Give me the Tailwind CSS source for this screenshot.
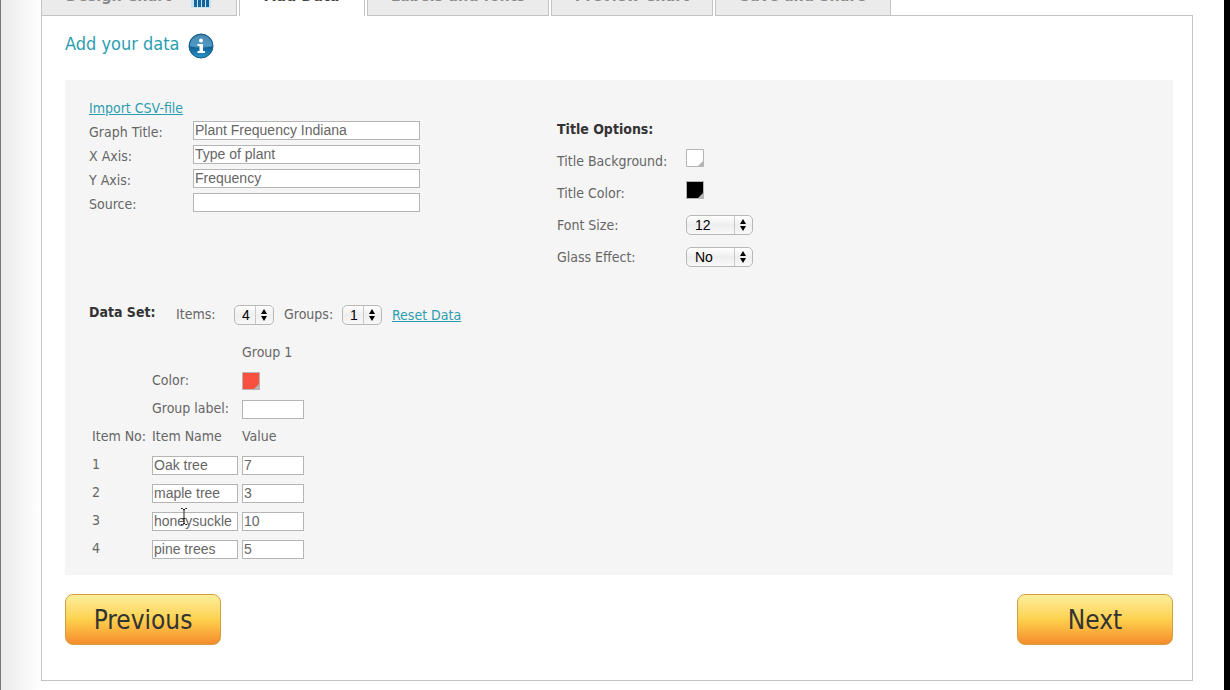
<!DOCTYPE html>
<html lang="en">

<head>
    <meta charset="UTF-8">
    <meta name="viewport" content="width=device-width, initial-scale=1.0">
    <title>Add Data</title>
    <script src="https://cdn.jsdelivr.net/npm/@tailwindcss/browser@4"></script>
</head>

<body class="bg-white font-['DejaVu_Sans_Condensed','DejaVu_Sans',sans-serif] text-sm text-[#666]">
    <div class="flex min-h-screen overflow-hidden">
        <div class="w-[41px] shrink-0 border-l border-[#777] bg-linear-to-r from-[#ebebeb] to-white"></div>
        <main class="min-w-0 flex-1">
            <!-- wizard steps -->
            <nav class="flex h-4 items-end gap-[2px] overflow-hidden text-base leading-6 font-bold text-[#8a8a8a]">
                <a href="#" class="flex h-12 w-[196px] shrink-0 items-end gap-5 border border-[#c4c4c4] bg-[#ebebeb] pb-[7px] pl-6">Design Chart
                    <svg class="h-6 w-5" viewBox="0 0 20 24">
                        <path fill="#c3e3f2" d="M0 0h20v24H0z" />
                        <path fill="#14659b" d="M3 8h3v15H3zM7 5h3v18H7zM11 3h3v20h-3zM15 0h3v23h-3z" />
                    </svg>
                </a>
                <a href="#" class="flex h-12 w-[126px] shrink-0 items-end justify-center border-x border-[#c4c4c4] bg-white pb-2 text-[#444]">Add Data</a>
                <a href="#" class="flex h-12 w-[182px] shrink-0 items-end justify-center border border-[#c4c4c4] bg-[#ebebeb] pb-[7px]">Labels and fonts</a>
                <a href="#" class="flex h-12 w-[162px] shrink-0 items-end justify-center border border-[#c4c4c4] bg-[#ebebeb] pb-[7px]">Preview Chart</a>
                <a href="#" class="flex h-12 w-[176px] shrink-0 items-end justify-center border border-[#c4c4c4] bg-[#ebebeb] pb-[7px]">Save and Share</a>
                <div class="h-px flex-1 -ml-[2px] bg-[#c4c4c4]"></div>
            </nav>

            <div class="border-x border-b border-[#c4c4c4] pt-4 pr-[19px] pb-[35px] pl-[23px]">
                <div class="mb-5 flex h-7 items-center gap-2">
                    <h1 class="pb-1 text-lg text-[#2b9db0]">Add your data</h1>
                    <button aria-label="Help">
                        <svg class="block size-[26px]" viewBox="0 0 26 26">
                            <defs>
                                <linearGradient id="ball" x1="0" y1="0" x2="0" y2="1">
                                    <stop offset="0" stop-color="#1f6a9c" />
                                    <stop offset=".5" stop-color="#2483b8" />
                                    <stop offset=".55" stop-color="#0f6096" />
                                    <stop offset="1" stop-color="#2a97c9" />
                                </linearGradient>
                            </defs>
                            <circle cx="13" cy="13" r="12" fill="url(#ball)" stroke="#155a86" />
                            <path d="M2 13a11 11 0 0 1 22 0q-11 4-22 0" fill="#fff" fill-opacity=".2" />
                            <circle cx="13" cy="7.500" r="2" fill="#fff" />
                            <path d="M9.500 11h5.500v7h2v2H9.500v-2h2v-5h-2z" fill="#fff" />
                        </svg>
                    </button>
                </div>

                <form class="bg-[#f5f5f5] px-6 pt-4 pb-3">
                    <div class="flex">
                        <div class="w-[468px] shrink-0">
                            <div class="flex h-6 items-center"><a href="#" class="text-[#2b9db0] underline">Import CSV-file</a></div>
                            <div class="flex h-6 items-center">
                                <label for="graphTitle" class="w-[104px]">Graph Title:</label>
                                <input id="graphTitle" type="text" value="Plant Frequency Indiana" class="mb-1 h-[19px] w-[227px] border border-[#b5b5b5] bg-white px-px font-['Liberation_Sans',sans-serif]">
                            </div>
                            <div class="flex h-6 items-center">
                                <label for="xAxis" class="w-[104px]">X Axis:</label>
                                <input id="xAxis" type="text" value="Type of plant" class="mb-1 h-[19px] w-[227px] border border-[#b5b5b5] bg-white px-px font-['Liberation_Sans',sans-serif]">
                            </div>
                            <div class="flex h-6 items-center">
                                <label for="yAxis" class="w-[104px]">Y Axis:</label>
                                <input id="yAxis" type="text" value="Frequency" class="mb-1 h-[19px] w-[227px] border border-[#b5b5b5] bg-white px-px font-['Liberation_Sans',sans-serif]">
                            </div>
                            <div class="flex h-6 items-center">
                                <label for="source" class="w-[104px]">Source:</label>
                                <input id="source" type="text" class="mb-1 h-[19px] w-[227px] border border-[#b5b5b5] bg-white px-px font-['Liberation_Sans',sans-serif]">
                            </div>
                        </div>

                        <div class="pt-[17px]">
                            <h2 class="flex h-8 items-center font-bold text-[#333]">Title Options:</h2>
                            <div class="flex h-8 items-center">
                                <label for="titleBackground" class="w-[129px]">Title Background:</label>
                                <button type="button" id="titleBackground" class="mb-[6px]">
                                    <svg class="block size-[18px]" viewBox="0 0 18 18">
                                        <path fill="#fff" stroke="#b5b5b5" d="M.5.5h17v17H.5z" />
                                        <path fill="#b5b5b5" d="M17 12v5h-5z" />
                                    </svg>
                                </button>
                            </div>
                            <div class="flex h-8 items-center">
                                <label for="titleColor" class="w-[129px]">Title Color:</label>
                                <button type="button" id="titleColor" class="mb-[6px]">
                                    <svg class="block size-[18px]" viewBox="0 0 18 18">
                                        <path fill="#000" stroke="#b5b5b5" d="M.5.5h17v17H.5z" />
                                        <path fill="#b5b5b5" d="M17 12v5h-5z" />
                                    </svg>
                                </button>
                            </div>
                            <div class="flex h-8 items-center">
                                <label for="fontSize" class="w-[129px]">Font Size:</label>
                                <div class="relative">
                                    <select id="fontSize" class="block h-5 w-[67px] appearance-none rounded-[5px] border border-[#b8b8b8] bg-linear-to-b from-white via-[#eee] to-[#f8f8f8] pl-2 font-['Liberation_Sans',sans-serif] text-sm leading-4 text-black">
                                        <option>12</option>
                                    </select>
                                    <svg class="pointer-events-none absolute top-0 right-0 h-5 w-5" viewBox="0 0 20 20">
                                        <path stroke="#c8c8c8" d="M1.500 1v18" />
                                        <path d="M7 9l3-5 3 5zM7 11l3 5 3-5z" />
                                    </svg>
                                </div>
                            </div>
                            <div class="flex h-8 items-center">
                                <label for="glassEffect" class="w-[129px]">Glass Effect:</label>
                                <div class="relative">
                                    <select id="glassEffect" class="block h-5 w-[67px] appearance-none rounded-[5px] border border-[#b8b8b8] bg-linear-to-b from-white via-[#eee] to-[#f8f8f8] pl-2 font-['Liberation_Sans',sans-serif] text-sm leading-4 text-black">
                                        <option>No</option>
                                    </select>
                                    <svg class="pointer-events-none absolute top-0 right-0 h-5 w-5" viewBox="0 0 20 20">
                                        <path stroke="#c8c8c8" d="M1.500 1v18" />
                                        <path d="M7 9l3-5 3 5zM7 11l3 5 3-5z" />
                                    </svg>
                                </div>
                            </div>
                        </div>
                    </div>

                    <div class="mt-[30px] mb-3 flex h-6 items-center">
                        <h2 class="w-[87px] pb-[6px] font-bold text-[#333]">Data Set:</h2>
                        <label for="items" class="w-[58px] pb-[2px]">Items:</label>
                        <div class="relative">
                            <select id="items" class="block h-5 w-10 appearance-none rounded-[5px] border border-[#b8b8b8] bg-linear-to-b from-white via-[#eee] to-[#f8f8f8] pl-[7px] font-['Liberation_Sans',sans-serif] text-sm leading-4 text-black">
                                <option>4</option>
                            </select>
                            <svg class="pointer-events-none absolute top-0 right-0 h-5 w-5" viewBox="0 0 20 20">
                                <path stroke="#c8c8c8" d="M1.500 1v18" />
                                <path d="M7 9l3-5 3 5zM7 11l3 5 3-5z" />
                            </svg>
                        </div>
                        <label for="groups" class="ml-[10px] w-[58px] pb-[2px]">Groups:</label>
                        <div class="relative">
                            <select id="groups" class="block h-5 w-10 appearance-none rounded-[5px] border border-[#b8b8b8] bg-linear-to-b from-white via-[#eee] to-[#f8f8f8] pl-[7px] font-['Liberation_Sans',sans-serif] text-sm leading-4 text-black">
                                <option>1</option>
                            </select>
                            <svg class="pointer-events-none absolute top-0 right-0 h-5 w-5" viewBox="0 0 20 20">
                                <path stroke="#c8c8c8" d="M1.500 1v18" />
                                <path d="M7 9l3-5 3 5zM7 11l3 5 3-5z" />
                            </svg>
                        </div>
                        <a href="#" class="ml-[10px] text-[#2b9db0] underline">Reset Data</a>
                    </div>

                    <table class="ml-[3px] w-[212px] table-fixed text-left whitespace-nowrap">
                        <colgroup>
                            <col class="w-[60px]">
                            <col class="w-[90px]">
                            <col class="w-[62px]">
                        </colgroup>
                        <tr class="h-7">
                            <td></td>
                            <td></td>
                            <th class="pb-[2px] font-normal">Group 1</th>
                        </tr>
                        <tr class="h-7">
                            <td></td>
                            <td class="pb-[2px]"><label for="groupColor">Color:</label></td>
                            <td>
                                <button type="button" id="groupColor" class="block">
                                    <svg class="block size-[18px]" viewBox="0 0 18 18">
                                        <path fill="#f9503f" stroke="#b5b5b5" d="M.5.5h17v17H.5z" />
                                        <path fill="#b5b5b5" d="M17 12v5h-5z" />
                                    </svg>
                                </button>
                            </td>
                        </tr>
                        <tr class="h-7">
                            <td></td>
                            <td class="pb-[2px]"><label for="groupLabel">Group label:</label></td>
                            <td><input id="groupLabel" type="text" class="block h-[19px] w-full border border-[#b5b5b5] bg-white px-px font-['Liberation_Sans',sans-serif]"></td>
                        </tr>
                        <tr class="h-7">
                            <th class="pb-[2px] font-normal">Item No:</th>
                            <th class="pb-[2px] font-normal">Item Name</th>
                            <th class="pb-[2px] font-normal">Value</th>
                        </tr>
                        <tr class="h-7">
                            <td class="pb-[2px]">1</td>
                            <td class="pr-1"><input type="text" aria-label="Item 1 name" value="Oak tree" class="block h-[19px] w-full border border-[#b5b5b5] bg-white px-px font-['Liberation_Sans',sans-serif]"></td>
                            <td><input type="text" aria-label="Item 1 value" value="7" class="block h-[19px] w-full border border-[#b5b5b5] bg-white px-px font-['Liberation_Sans',sans-serif]"></td>
                        </tr>
                        <tr class="h-7">
                            <td class="pb-[2px]">2</td>
                            <td class="pr-1"><input type="text" aria-label="Item 2 name" value="maple tree" class="block h-[19px] w-full border border-[#b5b5b5] bg-white px-px font-['Liberation_Sans',sans-serif]"></td>
                            <td><input type="text" aria-label="Item 2 value" value="3" class="block h-[19px] w-full border border-[#b5b5b5] bg-white px-px font-['Liberation_Sans',sans-serif]"></td>
                        </tr>
                        <tr class="h-7">
                            <td class="pb-[2px]">3</td>
                            <td class="relative pr-1">
                                <input type="text" aria-label="Item 3 name" value="honeysuckle" class="block h-[19px] w-full border border-[#b5b5b5] bg-white px-px font-['Liberation_Sans',sans-serif]">
                                <!-- text cursor -->
                                <svg class="pointer-events-none absolute top-px left-7 h-[17px] w-2" viewBox="0 0 8 17" fill="none" stroke="#222">
                                    <path d="M1 .5h1.500l1.500 1.500 1.500-1.500H7M4 2v13M1 16.500h1.500l1.500-1.500 1.500 1.500H7M2.500 10.500h3" />
                                </svg>
                            </td>
                            <td><input type="text" aria-label="Item 3 value" value="10" class="block h-[19px] w-full border border-[#b5b5b5] bg-white px-px font-['Liberation_Sans',sans-serif]"></td>
                        </tr>
                        <tr class="h-7">
                            <td class="pb-[2px]">4</td>
                            <td class="pr-1"><input type="text" aria-label="Item 4 name" value="pine trees" class="block h-[19px] w-full border border-[#b5b5b5] bg-white px-px font-['Liberation_Sans',sans-serif]"></td>
                            <td><input type="text" aria-label="Item 4 value" value="5" class="block h-[19px] w-full border border-[#b5b5b5] bg-white px-px font-['Liberation_Sans',sans-serif]"></td>
                        </tr>
                    </table>
                </form>

                <div class="mt-[19px] flex justify-between text-[26px] leading-8 text-[#333]">
                    <button class="h-[51px] w-[156px] rounded-lg border border-[#d0a040] bg-linear-to-b from-[#fdee9a] via-[#fdd14d] to-[#f58a2c]">Previous</button>
                    <button class="h-[51px] w-[156px] rounded-lg border border-[#d0a040] bg-linear-to-b from-[#fdee9a] via-[#fdd14d] to-[#f58a2c]">Next</button>
                </div>
            </div>
        </main>
        <div class="w-[37px] shrink-0 border-r-[6px] border-black"></div>
    </div>
</body>

</html>
